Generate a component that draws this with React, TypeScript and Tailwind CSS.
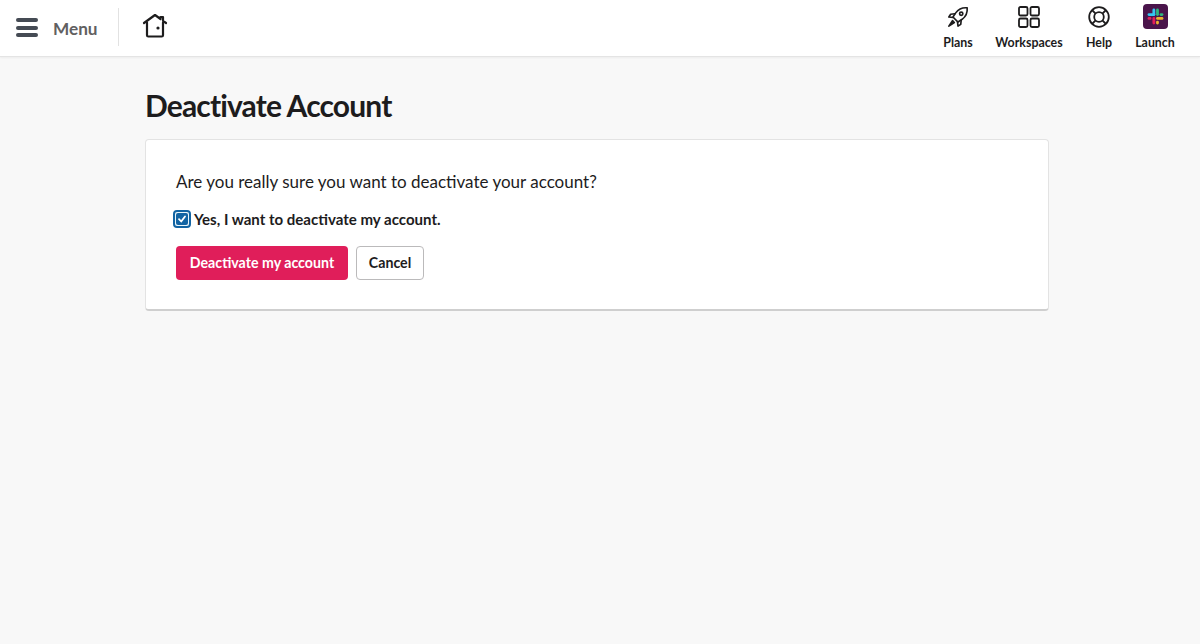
export default function App() {
  const font = "font-['Lato',sans-serif]";
  return (
    <div className={`min-h-[644px] bg-[#f8f8f8] ${font} text-[#1d1c1d]`}>
      <header className="h-[57px] bg-white border-b border-[#e4e4e4] shadow-[0_1px_2px_rgba(0,0,0,0.05)] flex items-start justify-between">
        <div className="flex items-center h-[56px]">
          <div className="flex flex-col gap-[3.5px] ml-[16px] w-[22px] -mt-[1px]">
            <div className="h-[4px] rounded-full bg-[#454b54]" />
            <div className="h-[4px] rounded-full bg-[#454b54]" />
            <div className="h-[4px] rounded-full bg-[#454b54]" />
          </div>
          <span className="ml-[15px] text-[17.2px] font-bold text-[#616061] leading-none mt-[2px]">Menu</span>
          <div className="ml-[20px] w-px h-[38px] -mt-[3px] bg-[#e2e2e2]" />
          <svg className="ml-[23px] -mt-[5px]" width="26" height="26" viewBox="0 0 26 26" fill="none" stroke="#1d1c1d" strokeWidth="2.2" strokeLinejoin="round" strokeLinecap="round">
            <path d="M2 10 13 2l5.500 4V4h2.500v3.800L24 10" />
            <path d="M5 9.500v12.700a1.300 1.300 0 0 0 1.300 1.300h13.400a1.300 1.300 0 0 0 1.300-1.300V9.500" />
            <circle cx="16" cy="15" r="1.600" fill="#1d1c1d" stroke="none" />
          </svg>
        </div>
        <nav className="flex items-start text-[12.4px] font-bold leading-none">
          <div className="flex flex-col items-center w-[30px] mr-[22px]">
            <svg className="mt-[6px]" width="22" height="22" viewBox="0 0 24 24" fill="none" stroke="#1d1c1d" strokeWidth="1.800" strokeLinejoin="round" strokeLinecap="round">
              <path d="M22 2c-5-.5-9.500 1.500-12.500 5.500L6.500 12l5.500 5.500 4.500-3C20.500 11.500 22.500 7 22 2Z" />
              <path d="M8.500 8.500 4 9l-2 3 4.500.5M15.500 15.500 15 20l-3 2-.5-4.500" />
              <circle cx="15.500" cy="8.500" r="1.800" />
              <path d="M6 16l-4 6 6-4Z" fill="#1d1c1d" />
            </svg>
            <span className="mt-[9px] whitespace-nowrap">Plans</span>
          </div>
          <div className="flex flex-col items-center w-[68px] mr-[21px]">
            <svg className="mt-[6px]" width="22" height="22" viewBox="0 0 22 22" fill="none" stroke="#1d1c1d" strokeWidth="1.800">
              <rect x="1" y="1" width="8.500" height="8.500" rx="1.500" />
              <rect x="12.500" y="1" width="8.500" height="8.500" rx="1.500" />
              <rect x="1" y="12.500" width="8.500" height="8.500" rx="1.500" />
              <rect x="12.500" y="12.500" width="8.500" height="8.500" rx="1.500" />
            </svg>
            <span className="mt-[9px] whitespace-nowrap">Workspaces</span>
          </div>
          <div className="flex flex-col items-center w-[30px] mr-[21px]">
            <svg className="mt-[6px]" width="22" height="22" viewBox="0 0 22 22" fill="none" stroke="#1d1c1d" strokeWidth="1.800">
              <circle cx="11" cy="11" r="9.800" />
              <circle cx="11" cy="11" r="4.800" />
              <path d="M4 4l3.600 3.600M18 4l-3.600 3.600M4 18l3.600-3.600M18 18l-3.600-3.600" />
            </svg>
            <span className="mt-[9px] whitespace-nowrap">Help</span>
          </div>
          <div className="flex flex-col items-center w-[40px] mr-[25px]">
            <div className="mt-[4px] w-[25px] h-[25px] rounded-[4px] bg-[#4a154b] flex items-center justify-center">
              <svg width="17" height="17" viewBox="0 0 15 15">
                <rect x="4.800" y="0.500" width="2.500" height="6.400" rx="1.250" fill="#36c5f0" />
                <rect x="0.500" y="4.600" width="6.800" height="2.400" rx="1.200" fill="#36c5f0" />
                <rect x="8" y="0.500" width="2.500" height="6.500" rx="1.250" fill="#2eb67d" />
                <rect x="11.100" y="4.600" width="3.400" height="2.400" rx="1.200" fill="#2eb67d" />
                <rect x="8" y="8" width="6.500" height="2.400" rx="1.200" fill="#ecb22e" />
                <rect x="8" y="11.200" width="2.500" height="3.300" rx="1.200" fill="#ecb22e" />
                <rect x="4.800" y="8" width="2.500" height="6.500" rx="1.250" fill="#e01e5a" />
                <rect x="0.500" y="8" width="3.400" height="2.400" rx="1.200" fill="#e01e5a" />
              </svg>
            </div>
            <span className="mt-[8px] whitespace-nowrap">Launch</span>
          </div>
        </nav>
      </header>
      <main className="w-[904px] ml-[145px]">
        <h1 className="mt-[30px] text-[30px] leading-[36px] font-bold tracking-[-0.85px]">Deactivate Account</h1>
        <section className="mt-[16px] h-[172px] bg-white border border-[#e3e3e3] border-b-[2px] border-b-[#cfcfcf] rounded-[4px] pl-[30px] pt-[32px]">
          <p className="text-[17px] leading-[20px]">Are you really sure you want to deactivate your account?</p>
          <label className="mt-[18px] flex items-center">
            <span className="w-[18px] h-[18px] -ml-[3px] rounded-[4px] border-[2px] border-[#1264a3] bg-[#e8f5fa] flex items-center justify-center">
              <span className="w-[12px] h-[12px] rounded-[2px] bg-[#1264a3] flex items-center justify-center">
                <svg width="10" height="10" viewBox="0 0 10 10" fill="none" stroke="#fff" strokeWidth="1.800" strokeLinecap="round" strokeLinejoin="round"><path d="M2 5.200 4.200 7.500 8 2.500" /></svg>
              </span>
            </span>
            <span className="ml-[3px] text-[15.050px] leading-[18px] font-bold">Yes, I want to deactivate my account.</span>
          </label>
          <div className="mt-[18px] flex gap-[8px]">
            <button className="h-[34px] w-[172px] rounded-[4px] bg-[#e01e5a] text-white text-[14.200px] font-bold">Deactivate my account</button>
            <button className="h-[34px] w-[68px] rounded-[4px] bg-white border border-[#bbbabb] text-[14.200px] font-bold">Cancel</button>
          </div>
        </section>
      </main>
    </div>
  );
}
